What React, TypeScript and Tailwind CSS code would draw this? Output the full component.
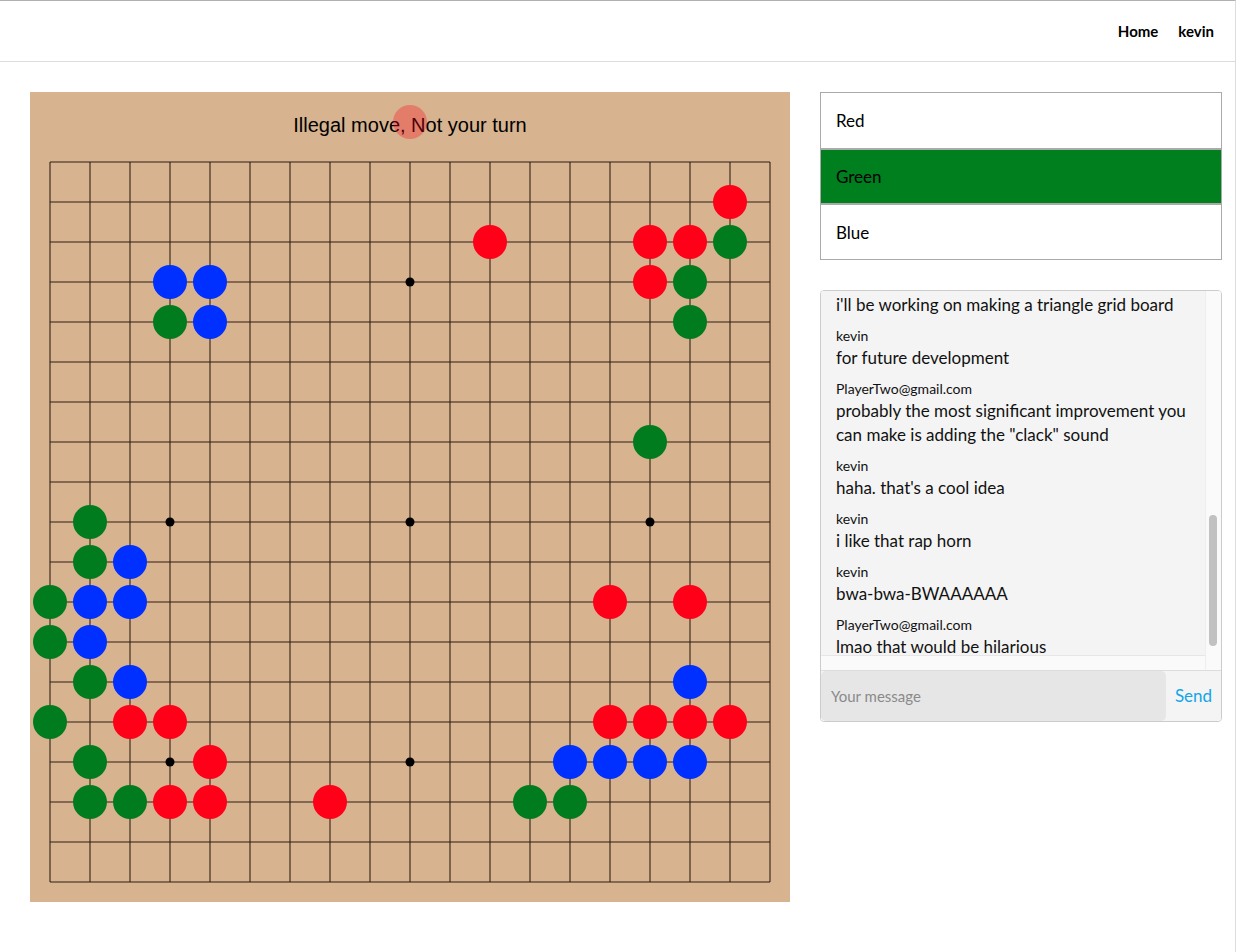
import React from "react";

type Stone = [number, number];

const RED: Stone[] = [
  [17, 1], [11, 2], [15, 2], [16, 2], [15, 3], [14, 11], [16, 11],
  [2, 14], [3, 14], [14, 14], [15, 14], [16, 14], [17, 14],
  [4, 15], [3, 16], [4, 16], [7, 16],
];

const GREEN: Stone[] = [
  [17, 2], [16, 3], [16, 4], [3, 4], [15, 7], [1, 9], [1, 10],
  [0, 11], [0, 12], [1, 13], [0, 14], [1, 15], [1, 16], [2, 16],
  [12, 16], [13, 16],
];

const BLUE: Stone[] = [
  [3, 3], [4, 3], [4, 4], [2, 10], [1, 11], [2, 11], [1, 12],
  [2, 13], [16, 13], [13, 15], [14, 15], [15, 15], [16, 15],
];

const STARS: Stone[] = [3, 9, 15].flatMap((r) => [3, 9, 15].map((c) => [c, r] as Stone));

// first entry is scrolled so its author line is out of view
const MESSAGES: { name?: string; text: string }[] = [
  { text: "i'll be working on making a triangle grid board" },
  { name: "kevin", text: "for future development" },
  {
    name: "PlayerTwo@gmail.com",
    text: 'probably the most significant improvement you can make is adding the "clack" sound',
  },
  { name: "kevin", text: "haha. that's a cool idea" },
  { name: "kevin", text: "i like that rap horn" },
  { name: "kevin", text: "bwa-bwa-BWAAAAAA" },
  { name: "PlayerTwo@gmail.com", text: "lmao that would be hilarious" },
];

const pos = (i: number) => 20 + i * 40;

function Board() {
  const lines = Array.from({ length: 19 }, (_, i) => i);
  return (
    <div className="relative w-[760px] h-[810px] shrink-0 bg-[#d7b38f]">
      <div
        className="h-[50px] pt-[21px] text-center text-[20px] leading-6 text-black"
        style={{ fontFamily: '"Liberation Sans", Arial, sans-serif' }}
      >
        Illegal move, Not your turn
      </div>
      <svg width="760" height="760" viewBox="0 0 760 760" className="block">
        <g stroke="#1a0f05" strokeOpacity="0.6" strokeWidth="1.6">
          {lines.map((i) => (
            <line key={"h" + i} x1={20} y1={pos(i)} x2={740} y2={pos(i)} />
          ))}
          {lines.map((i) => (
            <line key={"v" + i} x1={pos(i)} y1={20} x2={pos(i)} y2={740} />
          ))}
        </g>
        {STARS.map(([c, r]) => (
          <circle key={`s${c}-${r}`} cx={pos(c)} cy={pos(r)} r={4.5} fill="#000" />
        ))}
        {RED.map(([c, r]) => (
          <circle key={`r${c}-${r}`} cx={pos(c)} cy={pos(r)} r={17} fill="#ff0018" />
        ))}
        {GREEN.map(([c, r]) => (
          <circle key={`g${c}-${r}`} cx={pos(c)} cy={pos(r)} r={17} fill="#007c1e" />
        ))}
        {BLUE.map(([c, r]) => (
          <circle key={`b${c}-${r}`} cx={pos(c)} cy={pos(r)} r={17} fill="#0030ff" />
        ))}
      </svg>
      {/* hover preview stone */}
      <span className="absolute left-[363px] top-[13px] w-[34px] h-[34px] rounded-full bg-[#ff0018]/30" />
    </div>
  );
}

function ColorPicker() {
  return (
    <div className="border border-[#aaa] text-[17px] text-black">
      <div className="h-[55px] flex items-center px-[15px] bg-white">Red</div>
      <div className="h-[57px] flex items-center px-[15px] bg-[#007f1f] border-y-2 border-[#aaa]">
        Green
      </div>
      <div className="h-[54px] flex items-center px-[15px] pt-[1px] bg-white">Blue</div>
    </div>
  );
}

function Chat() {
  return (
    <div className="mt-[30px] border border-[#ccc] rounded-[4px] overflow-hidden">
      <div className="flex h-[379px] bg-[#fafafa]">
        <div className="flex-1 overflow-hidden">
          <div className="h-[365px] overflow-hidden bg-[#f4f4f4] border-b border-[#e6e6e6]">
            <div className="pt-[2px] pl-[15px] pr-2 flex flex-col gap-[9px]">
              {MESSAGES.map((m, i) => (
                <div key={i}>
                  {m.name && <div className="text-[14px] leading-5 text-[#111]">{m.name}</div>}
                  <div className="text-[17px] leading-6 text-[#111]">{m.text}</div>
                </div>
              ))}
            </div>
          </div>
        </div>
        <div className="w-4 border-l border-[#eee] bg-[#fafafa] relative">
          <div className="absolute left-[3px] top-[224px] w-2 h-[131px] rounded-full bg-[#c1c1c1]" />
        </div>
      </div>
      <div className="flex h-[51px] border-t border-[#ddd] bg-[#f4f4f4]">
        <div className="flex-1 rounded-[5px] bg-[#e6e6e6] flex items-center px-[10px] text-[15px] text-[#8a8a8a]">
          Your message
        </div>
        <div className="w-[55px] flex items-center justify-center text-[17px] text-[#10a6e8]">
          Send
        </div>
      </div>
    </div>
  );
}

export default function App() {
  return (
    <div
      className="w-[1236px] min-h-[952px] bg-white border-r border-[#ddd] border-t border-t-[#b0b0b0]"
      style={{ fontFamily: 'Lato, "Open Sans", sans-serif' }}
    >
      <header className="h-[61px] border-b border-[#ddd] flex items-center justify-end gap-[20px] pr-[21px] text-[15px] font-bold text-black">
        <span>Home</span>
        <span>kevin</span>
      </header>
      <main className="flex gap-[30px] pl-[30px] pt-[30px]">
        <Board />
        <div className="w-[402px]">
          <ColorPicker />
          <Chat />
        </div>
      </main>
    </div>
  );
}
